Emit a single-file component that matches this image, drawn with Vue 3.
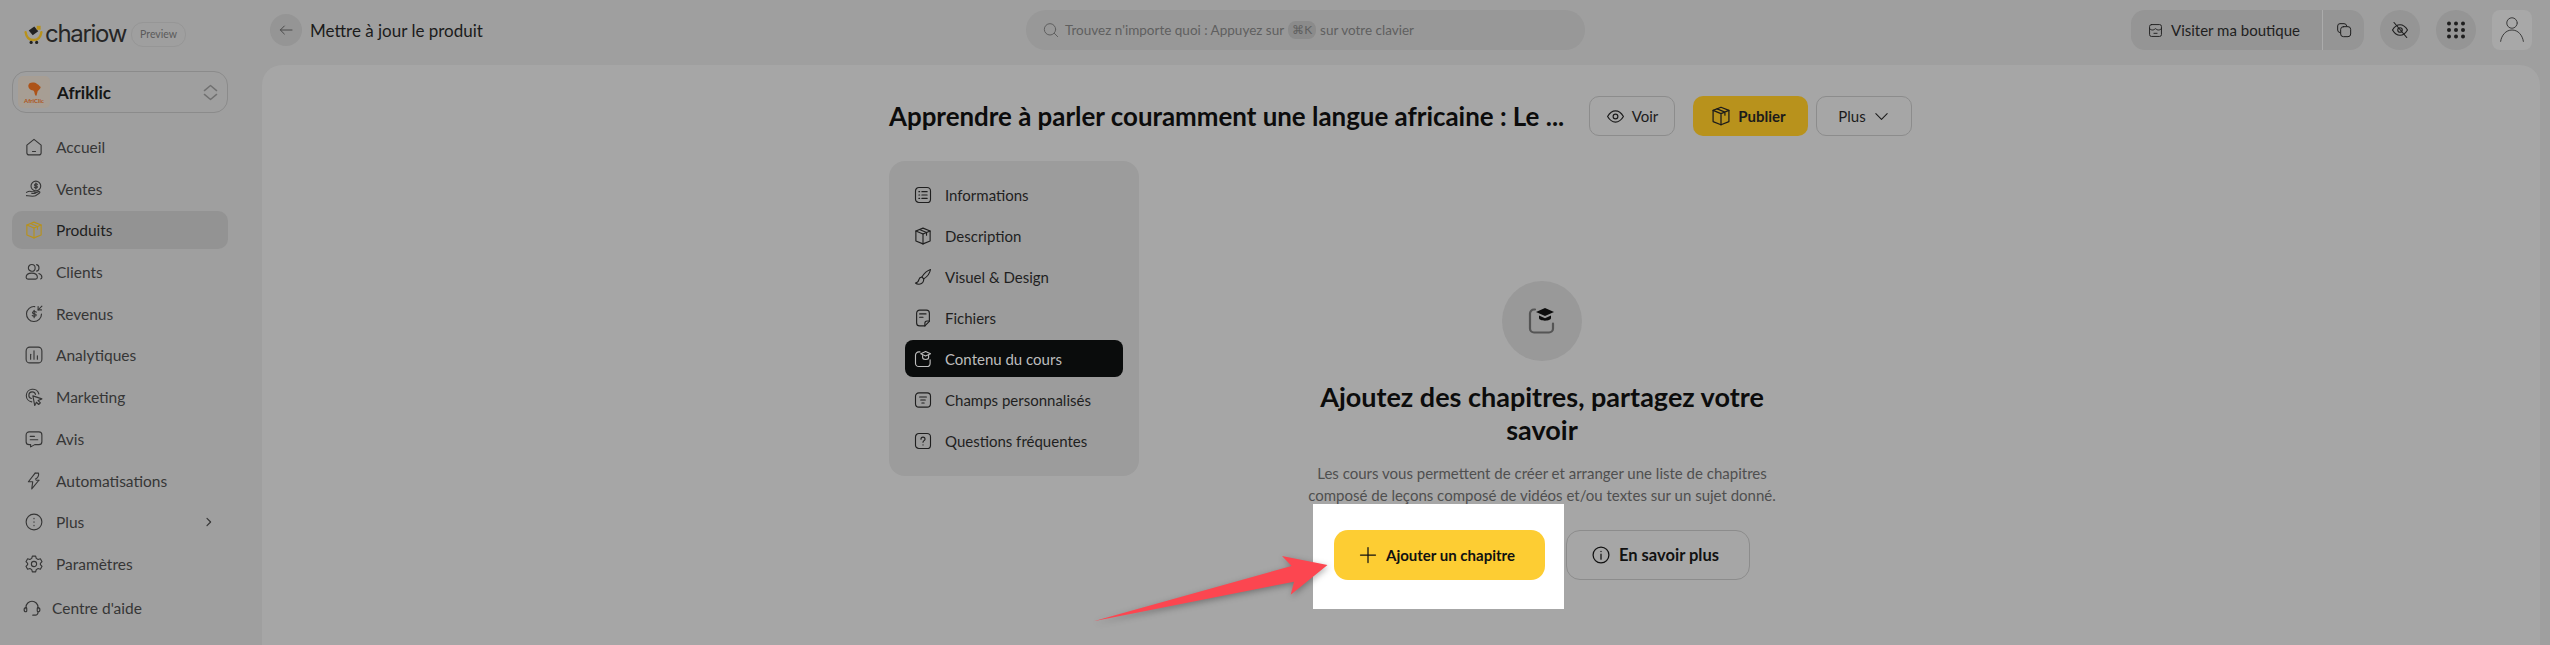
<script setup>
const nav = [
  { label: 'Accueil', icon: ['M2.500 9.500 12 1.800l9.500 7.700v10a3 3 0 0 1-3 3h-13a3 3 0 0 1-3-3z', 'M10 18h4'] },
  { label: 'Ventes', icon: ['M21 8a6.500 6.500 0 1 1-13 0a6.500 6.500 0 0 1 13 0', 'M16.500 6c-.5-1-3.800-1.200-3.800.6 0 1.700 3.800.8 3.800 2.600 0 1.700-3.300 1.500-4 .4', 'M14.500 4v8', 'M2 16.500c3-1.800 5-2 7-.8h3.500c1.500 0 1.500 2.300 0 2.300H9', 'M13 17.500l5-2c1.800-.6 2.500 1.200 1 2.200l-5 3.300c-3 1.300-7 .5-12-.2'] },
  { label: 'Produits', active: true, icon: ['M12 1.500l9.500 3.800v13.400L12 22.500l-9.500-3.800V5.300z', 'M2.500 5.300 12 9.200l9.500-3.900', 'M12 9.200v13.300', 'M7.300 3.400l9.400 3.900v3.700'] },
  { label: 'Clients', icon: ['M13.500 6.500a4.500 4.500 0 1 1-9 0a4.500 4.500 0 0 1 9 0', 'M15.500 2.200a4.500 4.500 0 0 1 0 8.600', 'M1.500 19c0-3.500 3.500-5.500 7.500-5.500s7.500 2 7.500 5.500c0 1.800-1 2.500-2.500 2.500H4c-1.500 0-2.500-.7-2.500-2.500z', 'M18.500 14c2.300.8 4 2.500 4 5 0 1.200-.6 2-1.700 2.300'] },
  { label: 'Revenus', icon: ['M13 2.100A10 10 0 1 0 22 12', 'M15 9.500c-.5-1-5-1.300-5 .8 0 2 5 1 5 3.100 0 2-4.500 1.800-5.300.5', 'M12.200 7v10', 'M22.500 1.500l-5 5', 'M17.500 2v4.500H22'] },
  { label: 'Analytiques', icon: ['M6.500 1.500h11a5 5 0 0 1 5 5v11a5 5 0 0 1-5 5h-11a5 5 0 0 1-5-5v-11a5 5 0 0 1 5-5z', 'M7.500 11v6.500', 'M12 6.500v11', 'M16.500 13v4.500'] },
  { label: 'Marketing', icon: ['M9 18.500A8.500 8.500 0 1 1 18.500 8', 'M8.500 14A4.500 4.500 0 1 1 14 8.500', 'M10.500 10.500l12 4-5 2.200 3 3-2.300 2.300-3-3-2.200 4.500z'] },
  { label: 'Avis', icon: ['M6 2.500h12.500a4 4 0 0 1 4 4v9a4 4 0 0 1-4 4H13l-5.500 3V19.500H5.500a4 4 0 0 1-4-4v-9a4 4 0 0 1 4.500-4z', 'M7 8.500h5.500', 'M7 13h10'] },
  { label: 'Automatisations', icon: ['M13.500 1.500 4.500 13h5.800l-1.300 9.500 9.500-11.500', 'M13.500 1.500h4.500c1 3.500-1.500 7-4 8', 'M15 11h3.500'] },
  { label: 'Plus', chevron: true, icon: ['M22.500 12a10.500 10.500 0 1 1-21 0a10.500 10.500 0 0 1 21 0', 'M12 7v.5', 'M12 11.800v.5', 'M12 16.500v.5'] },
  { label: 'Paramètres', icon: ['M15.500 12a3.500 3.500 0 1 1-7 0a3.500 3.500 0 0 1 7 0', 'M9.800 1.500h4.400l.8 3 2.500 1.500 3-.9 2.200 3.800-2.200 2.200v1.800l2.200 2.200-2.200 3.800-3-.9-2.500 1.500-.8 3H9.800l-.8-3-2.500-1.500-3 .9-2.200-3.800 2.200-2.200v-1.800L1.300 8.900l2.200-3.800 3 .9L9 4.500z'] },
]

const tabs = [
  { label: 'Informations', icon: ['M6.500 2h11a4.500 4.500 0 0 1 4.500 4.500v11a4.500 4.500 0 0 1-4.500 4.500h-11A4.500 4.500 0 0 1 2 17.500v-11A4.500 4.500 0 0 1 6.500 2z', 'M6.500 7.500h1', 'M10.500 7.500h7', 'M6.500 12h1', 'M10.500 12h7', 'M6.500 16.500h1', 'M10.500 16.500h7'] },
  { label: 'Description', icon: ['M12 1.500l9.500 3.800v13.400L12 22.500l-9.500-3.800V5.300z', 'M2.500 5.300 12 9.200l9.500-3.900', 'M12 9.200v13.300', 'M7.300 3.400l9.400 3.900v3.700'] },
  { label: 'Visuel & Design', icon: ['M22 2c-4.500 1.500-9 6-11.500 10l2.500 2.500c4-2.500 8-7 9-12.500z', 'M10.500 12c-2.500.2-3.500 1.500-4 3.500-.4 2-2 4-4.500 4.500 2.500 2.500 7 2 9.500-.5 1.300-1.500 1.500-3.200 1.500-5'] },
  { label: 'Fichiers', icon: ['M14.500 22.500H7.500A4 4 0 0 1 3.500 18.500V5.500a4 4 0 0 1 4-4h9a4 4 0 0 1 4 4v11z', 'M7.500 6.500h8.500', 'M7.500 11h4.500', 'M20.500 16h-3a3 3 0 0 0-3 3v3.500'] },
  { label: 'Contenu du cours', active: true, icon: ['M8 2.500H6.500a4.500 4.500 0 0 0-4.500 4.500v10.500A4.500 4.500 0 0 0 6.500 22H17a4.500 4.500 0 0 0 4.500-4.500V13', 'M15.500 2l6.500 3-6.500 3-6.500-3z', 'M11.500 7.500V10c0 3.500 8 3.500 8 0V7'] },
  { label: 'Champs personnalisés', icon: ['M6.500 2.500h11a4.500 4.500 0 0 1 4.500 4.500v10a4.500 4.500 0 0 1-4.500 4.500h-11A4.500 4.500 0 0 1 2 17V7a4.500 4.500 0 0 1 4.500-4.500z', 'M7.500 8h9', 'M9 12h6', 'M10.500 16h3'] },
  { label: 'Questions fréquentes', icon: ['M6.500 2h11a4.500 4.500 0 0 1 4.500 4.500v11a4.500 4.500 0 0 1-4.500 4.500h-11A4.500 4.500 0 0 1 2 17.500v-11A4.500 4.500 0 0 1 6.500 2z', 'M9.300 9.500c0-3.500 5.400-3.500 5.400 0 0 2-2.700 2-2.700 4', 'M12 17v.3'] },
]
const help = ['M4 13v-2a8 8 0 0 1 16 0v2', 'M4 11.500c-1.500 0-2.500 1.200-2.500 2.700S2.500 17 4 17c.7 0 1-.4 1-1v-3.500c0-.6-.3-1-1-1z', 'M20 11.500c1.500 0 2.500 1.200 2.500 2.700S21.500 17 20 17c-.7 0-1-.4-1-1v-3.500c0-.6.3-1 1-1z', 'M20 17v1a3.500 3.500 0 0 1-3.500 3.500H13']
</script>

<template>
  <div class="page">
    <aside class="sidebar">
      <div class="brand">
        <svg class="brand__logo" viewBox="0 0 24 24" width="19" height="21">
          <path d="M2 9c1 7 5 10 10 10s9-3 10-10" fill="none" stroke="#b8921c" stroke-width="3" />
          <path d="M6 7l7-5 5 6-7 5z" fill="#222" />
          <rect x="16" y="1" width="5" height="5" fill="#b8921c" />
          <circle cx="9" cy="22" r="2" fill="#222" />
          <circle cx="16" cy="22" r="2" fill="#222" />
        </svg>
        <span class="brand__name">chariow</span>
        <span class="brand__tag">Preview</span>
      </div>

      <div class="shop">
        <div class="shop__logo">
          <svg viewBox="0 0 24 20" width="18" height="19">
            <path d="M6 1.500c3-1.500 8-1 10 1 2 .5 3 3 5 4-.5 2.500-2.500 4-4 5.500-.5 2-1 3-1.500 6-2 1-2.500-2-3-4.500-.5-2-2-3-4.500-3C5.500 9.500 4 7 4.500 4z" fill="#ad5318" />
          </svg>
          <span class="shop__logo-text">AfriClic</span>
        </div>
        <span class="shop__name">Afriklic</span>
        <svg class="shop__arrows" viewBox="0 0 16 18" width="15" height="17">
          <path d="M1.500 7 8 1.500 14.500 7" />
          <path d="M1.500 11 8 16.500 14.500 11" />
        </svg>
      </div>

      <nav class="nav">
        <a v-for="item in nav" :key="item.label" class="nav__item" :class="{ 'nav__item--active': item.active }">
          <svg class="nav__icon" viewBox="0 0 24 24" width="18" height="18">
            <path v-for="d in item.icon" :key="d" :d="d" />
          </svg>
          <span>{{ item.label }}</span>
          <svg v-if="item.chevron" class="nav__chevron" viewBox="0 0 10 12" width="8" height="10">
            <path d="M2.500 1.500 7 6l-4.500 4.500" />
          </svg>
        </a>
      </nav>

      <a class="help">
        <svg class="nav__icon" viewBox="0 0 24 24" width="18" height="18">
          <path v-for="d in help" :key="d" :d="d" />
        </svg>
        <span>Centre d'aide</span>
      </a>
    </aside>

    <div class="content">
      <header class="topbar">
        <div class="topbar__left">
          <button class="round-btn round-btn--back">
            <svg viewBox="0 0 24 24" width="16" height="16"><path d="M21 12H3.500M9.500 6l-6 6 6 6" /></svg>
          </button>
          <span class="topbar__title">Mettre à jour le produit</span>
        </div>

        <div class="search">
          <svg viewBox="0 0 24 24" width="16" height="16"><path d="M19 11a8.500 8.500 0 1 1-17 0a8.500 8.500 0 0 1 17 0M17 17l5 5" /></svg>
          <span>Trouvez n'importe quoi : Appuyez sur</span>
          <kbd class="search__key">⌘K</kbd>
          <span>sur votre clavier</span>
        </div>

        <div class="topbar__right">
          <div class="visit">
            <a class="visit__main">
              <svg viewBox="0 0 24 24" width="15" height="15">
                <path d="M5.500 2.500h13A3 3 0 0 1 21.500 5.500v13a3 3 0 0 1-3 3h-13a3 3 0 0 1-3-3v-13a3 3 0 0 1 3-3z" />
                <path d="M2.500 9c3 3 6 3 9.500 0 3.500 3 6.500 3 9.500 0M9.500 16.500h5" />
              </svg>
              Visiter ma boutique
            </a>
            <a class="visit__copy">
              <svg viewBox="0 0 24 24" width="16" height="16">
                <path d="M16 6V6a4 4 0 0 0-4-3.500H6A3.500 3.500 0 0 0 2.500 6v6A4 4 0 0 0 6 16" />
                <path d="M11 7h7a4 4 0 0 1 4 4v7a4 4 0 0 1-4 4h-7a4 4 0 0 1-4-4v-7a4 4 0 0 1 4-4z" />
              </svg>
            </a>
          </div>
          <button class="round-btn">
            <svg viewBox="0 0 24 24" width="18" height="18">
              <path d="M2 12c3-5 6.500-7 10-7s7 2 10 7c-3 5-6.500 7-10 7s-7-2-10-7z" />
              <path d="M15 12a3 3 0 1 1-6 0a3 3 0 0 1 6 0M4 2l17 20" />
            </svg>
          </button>
          <button class="round-btn">
            <svg class="dots" viewBox="0 0 18 18" width="18" height="18">
              <template v-for="r in [2.500, 9, 15.500]" :key="r">
                <circle v-for="c in [2, 9, 16]" :key="c" :cx="c" :cy="r" r="2" />
              </template>
            </svg>
          </button>
          <div class="avatar">
            <svg viewBox="0 0 32 32" width="28" height="28">
              <path d="M22 8a6 6 0 1 1-12 0a6 6 0 0 1 12 0M3 29c1-7 6-13 13-13s12 6 13 13" />
            </svg>
          </div>
        </div>
      </header>

      <main class="panel">
        <div class="editor">
          <div class="editor__head">
            <h1 class="editor__title">Apprendre à parler couramment une langue africaine : Le ...</h1>
            <div class="editor__actions">
              <button class="btn btn--ghost btn--voir">
                <svg viewBox="0 0 24 24" width="19" height="19">
                  <path d="M2 12c3-5 6.500-7 10-7s7 2 10 7c-3 5-6.500 7-10 7s-7-2-10-7z" />
                  <path d="M15 12a3 3 0 1 1-6 0a3 3 0 0 1 6 0" />
                </svg>
                Voir
              </button>
              <button class="btn btn--publish">
                <svg viewBox="0 0 24 24" width="20" height="20">
                  <path d="M12 1.500l9.500 3.800v13.400L12 22.500l-9.500-3.800V5.300z" />
                  <path d="M2.500 5.300 12 9.200l9.500-3.900M12 9.200v13.300M7.300 3.400l9.400 3.900v3.700" />
                </svg>
                Publier
              </button>
              <button class="btn btn--ghost btn--plus">
                Plus
                <svg viewBox="0 0 24 24" width="17" height="17"><path d="M4 8l8 8 8-8" /></svg>
              </button>
            </div>
          </div>

          <div class="editor__body">
            <ul class="tabs">
              <li v-for="tab in tabs" :key="tab.label" class="tabs__item" :class="{ 'tabs__item--active': tab.active }">
                <svg viewBox="0 0 24 24" width="18" height="18">
                  <path v-for="d in tab.icon" :key="d" :d="d" />
                </svg>
                {{ tab.label }}
              </li>
            </ul>

            <section class="empty">
              <div class="empty__icon">
                <svg viewBox="0 0 28 28" width="28" height="28">
                  <path class="empty__box" d="M7 2.500H6A4 4 0 0 0 2 6.500v15a4 4 0 0 0 4 4h15a4 4 0 0 0 4-4v-5" />
                  <path class="empty__cap" d="M17 1l9 4-9 4-9-4z" />
                  <path class="empty__cap" d="M11 8.500v2.500c0 3.500 12 3.500 12 0V8.500l-6 2.700z" />
                </svg>
              </div>
              <h2 class="empty__title">Ajoutez des chapitres, partagez votre savoir</h2>
              <p class="empty__text">Les cours vous permettent de créer et arranger une liste de chapitres composé de leçons composé de vidéos et/ou textes sur un sujet donné.</p>
              <div class="empty__actions">
                <div class="spotlight">
                  <button class="cta">
                    <svg viewBox="0 0 24 24" width="20" height="20"><path d="M12 3v18M3 12h18" /></svg>
                    Ajouter un chapitre
                  </button>
                </div>
                <button class="more">
                  <svg viewBox="0 0 24 24" width="20" height="20">
                    <path d="M21.500 12a9.500 9.500 0 1 1-19 0a9.500 9.500 0 0 1 19 0M12 11v6M12 7.500v.3" />
                  </svg>
                  En savoir plus
                </button>
              </div>
            </section>
          </div>
        </div>
      </main>
    </div>

    <svg class="arrow" viewBox="0 0 250 80" width="250" height="80">
      <path d="M3.500 71.200 201.600 16 192 6l45.500 9-36.800 29.700 3.300-13z" />
    </svg>
  </div>
</template>

<style scoped>
.page {
  position: relative;
  display: flex;
  width: 2550px;
  height: 645px;
  overflow: hidden;
  background: #9f9f9f;
  color: #2c2c2c;
  font-family: Lato, "Noto Sans", sans-serif;
}

svg {
  flex: none;
  fill: none;
  stroke: currentColor;
  stroke-width: 1.5;
  stroke-linecap: round;
  stroke-linejoin: round;
}

button {
  font-family: inherit;
  cursor: pointer;
}

/* sidebar */
.sidebar {
  flex: none;
  width: 262px;
  padding: 0 34px 0 12px;
  box-sizing: border-box;
}

.brand {
  display: flex;
  align-items: center;
  height: 71px;
  padding: 0 0 3px 12px;
  box-sizing: border-box;
}

.brand__logo {
  stroke: none;
  margin-right: 2px;
}

.brand__name {
  font-family: Inter, sans-serif;
  font-size: 24px;
  line-height: 30px;
  letter-spacing: -1.3px;
  color: #262626;
}

.brand__tag {
  margin-left: 5px;
  padding: 0 8px;
  height: 23px;
  line-height: 23px;
  border: 1px solid #969696;
  border-radius: 12px;
  font-size: 10.500px;
  color: #5b5b5b;
}

.shop {
  display: flex;
  align-items: center;
  height: 42px;
  padding: 0 9px 0 5px;
  border: 1px solid #8b8b8b;
  border-radius: 14px;
  box-sizing: border-box;
}

.shop__logo {
  display: flex;
  flex-direction: column;
  align-items: center;
  justify-content: center;
  width: 32px;
  height: 32px;
  border-radius: 5px;
  background: #a79e94;
}

.shop__logo svg {
  stroke: none;
}

.shop__logo-text {
  margin-top: -2px;
  font-size: 6px;
  line-height: 7px;
  font-weight: 700;
  color: #ad5318;
}

.shop__name {
  margin-left: 7px;
  font-size: 17px;
  font-weight: 700;
  color: #161616;
}

.shop__arrows {
  margin-left: auto;
  color: #707070;
}

.nav {
  display: flex;
  flex-direction: column;
  gap: 3.700px;
  margin-top: 15px;
}

.nav__item {
  display: flex;
  align-items: center;
  gap: 13px;
  height: 38px;
  padding: 0 13px;
  border-radius: 10px;
  font-size: 15.500px;
  color: #363636;
}

.nav__item--active {
  background: #939393;
  color: #1e1e1e;
}

.nav__item--active .nav__icon {
  color: #b8921c;
}

.nav__chevron {
  margin-left: auto;
  margin-right: 2px;
}

.help {
  display: flex;
  align-items: center;
  gap: 11px;
  height: 38px;
  margin-top: 6px;
  padding: 0 11px;
  font-size: 15.500px;
  color: #363636;
}

/* top bar */
.content {
  flex: 1;
  display: flex;
  flex-direction: column;
  min-width: 0;
}

.topbar {
  position: relative;
  display: flex;
  align-items: center;
  flex: none;
  height: 65px;
  padding: 0 18px 5px 8px;
  box-sizing: border-box;
}

.topbar__left,
.topbar__right {
  display: flex;
  align-items: center;
}

.topbar__left {
  flex: none;
  width: 756px;
  gap: 8px;
}

.topbar__title {
  font-size: 17px;
  color: #1b1b1b;
}

.round-btn {
  display: flex;
  align-items: center;
  justify-content: center;
  width: 40px;
  height: 40px;
  padding: 0;
  border: 0;
  border-radius: 50%;
  background: #959595;
  color: #1f1f1f;
}

.round-btn--back {
  width: 32px;
  height: 32px;
  color: #4a4a4a;
}

.dots {
  fill: #1f1f1f;
  stroke: none;
}

.search {
  display: flex;
  align-items: center;
  flex: none;
  width: 559px;
  height: 40px;
  padding-left: 17px;
  box-sizing: border-box;
  border-radius: 20px;
  background: #989898;
  font-size: 13.500px;
  color: #5f5f5f;
}

.search svg {
  margin-right: 6px;
}

.search__key {
  margin: 0 4px;
  padding: 0 4px;
  height: 18px;
  line-height: 18px;
  border-radius: 8px;
  background: #8b8b8b;
  font-family: inherit;
  font-size: 12px;
}

.topbar__right {
  gap: 16px;
  margin-left: auto;
}

.visit {
  display: flex;
  height: 40px;
  border-radius: 14px;
  background: #959595;
  color: #1f1f1f;
}

.visit__main {
  display: flex;
  align-items: center;
  gap: 8px;
  width: 192px;
  padding-left: 17px;
  box-sizing: border-box;
  border-right: 1px solid #ababab;
  font-size: 15px;
}

.visit__copy {
  display: flex;
  align-items: center;
  justify-content: center;
  width: 41px;
}

.avatar {
  display: flex;
  align-items: center;
  justify-content: center;
  width: 40px;
  height: 40px;
  border-radius: 8px;
  background: #a8a8a8;
  color: #2b2b2b;
}

.avatar svg {
  stroke-width: 1;
}

/* main panel */
.panel {
  flex: 1;
  margin-right: 10px;
  padding-left: 627px;
  border-radius: 20px 20px 0 0;
  background: #a6a6a6;
}

.editor {
  width: 1023px;
}

.editor__head {
  display: flex;
  align-items: center;
  justify-content: space-between;
  height: 96px;
  padding-top: 6px;
  box-sizing: border-box;
}

.editor__title {
  margin: 0;
  font-size: 25.900px;
  font-weight: 700;
  color: #0c0c0c;
  white-space: nowrap;
}

.editor__actions {
  display: flex;
  gap: 8px;
}

.btn {
  display: flex;
  align-items: center;
  justify-content: center;
  gap: 7px;
  height: 40px;
  padding: 0;
  border-radius: 10px;
  font-size: 15px;
  color: #1b1b1b;
}

.btn--ghost {
  border: 1px solid #8c8c8c;
  background: transparent;
}

.btn--voir {
  width: 86px;
  margin-right: 10px;
}

.btn--plus {
  width: 96px;
}

.btn--publish {
  width: 115px;
  padding-right: 4px;
  border: 0;
  background: #b8921c;
  font-weight: 700;
}

.editor__body {
  display: flex;
  align-items: flex-start;
  gap: 33px;
}

.tabs {
  flex: none;
  display: flex;
  flex-direction: column;
  gap: 4px;
  width: 250px;
  height: 315px;
  margin: 0;
  padding: 15px 16px;
  box-sizing: border-box;
  list-style: none;
  border-radius: 16px;
  background: #9c9c9c;
}

.tabs__item {
  display: flex;
  align-items: center;
  gap: 13px;
  height: 37px;
  padding: 0 9px;
  border-radius: 8px;
  font-size: 15px;
  color: #1f1f1f;
}

.tabs__item--active {
  background: #0a0c0c;
  color: #bdbdbd;
}

/* empty state */
.empty {
  flex: 1;
  display: flex;
  flex-direction: column;
  align-items: center;
  padding-top: 120px;
  text-align: center;
}

.empty__icon {
  display: flex;
  align-items: center;
  justify-content: center;
  width: 80px;
  height: 80px;
  border-radius: 50%;
  background: #999999;
}

.empty__box {
  stroke: #555555;
  stroke-width: 2.200;
}

.empty__cap {
  fill: #0c0c0c;
  stroke: none;
}

.empty__title {
  width: 480px;
  margin: 19px 0 0;
  font-size: 27px;
  line-height: 33px;
  font-weight: 700;
  color: #0c0c0c;
}

.empty__text {
  width: 490px;
  margin: 16px 0 0;
  font-size: 15px;
  line-height: 22px;
  color: #4f4f4f;
}

.empty__actions {
  display: flex;
  gap: 21px;
  margin-top: 24px;
}

.spotlight {
  margin: -26px -19px -29px -21px;
  padding: 26px 19px 29px 21px;
  background: #ffffff;
}

.cta,
.more {
  display: flex;
  align-items: center;
  justify-content: center;
  gap: 8px;
  height: 50px;
  padding: 0 6px 0 0;
  border-radius: 14px;
  font-size: 15px;
  font-weight: 700;
  color: #111111;
}

.cta {
  width: 211px;
  border: 0;
  background: #fdcd33;
}

.more {
  width: 184px;
  border: 1px solid #8c8c8c;
  background: transparent;
  font-size: 16.500px;
}

.arrow {
  position: absolute;
  left: 1090px;
  top: 550px;
  stroke: none;
  fill: #fc4650;
  filter: drop-shadow(1px 2px 3px rgba(0, 0, 0, 0.3));
}
</style>
